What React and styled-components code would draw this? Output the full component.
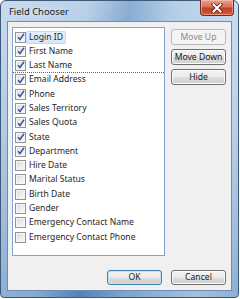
import React from "react";
import styled, { createGlobalStyle } from "styled-components";

const GlobalStyle = createGlobalStyle`
  html, body {
    margin: 0;
    padding: 0;
    background: #ffffff;
  }
  body {
    font-family: "Noto Sans", "Liberation Sans", sans-serif;
    font-size: 8.6px;
    color: #1e1e1e;
  }
`;

const Window = styled.div`
  width: 239px;
  height: 298px;
  box-sizing: border-box;
  display: flex;
  flex-direction: column;
  padding: 0 6px 6px 6px;
  border: 1px solid #3e5876;
  border-radius: 6px 6px 4px 4px;
  background:
    linear-gradient(100deg, rgba(255,255,255,0.4) 0%, rgba(255,255,255,0.25) 30%, rgba(40,90,150,0.2) 45%, rgba(255,255,255,0.2) 60%, rgba(255,255,255,0.45) 85%, rgba(255,255,255,0.3) 100%),
    linear-gradient(to bottom, #a3c3e3 0%, #8bb0d6 40%, #5b8cc0 100%);
  position: relative;
`;

const TitleBar = styled.div`
  height: 20px;
  display: flex;
  align-items: center;
  padding-left: 2px;
  font-size: 9.4px;
  color: #1a1a1a;
  text-shadow: 0 0 6px rgba(255, 255, 255, 0.9);
`;

const CloseButton = styled.div`
  position: absolute;
  top: -1px;
  right: 4px;
  width: 34px;
  height: 16px;
  box-sizing: border-box;
  border: 1px solid #6b2a22;
  border-top: none;
  border-radius: 0 0 4px 4px;
  background: linear-gradient(to bottom, #eba08e 0%, #d9705a 45%, #c53d22 55%, #d45a36 100%);
  box-shadow: inset 0 0 0 1px rgba(255, 210, 200, 0.5);
  display: flex;
  align-items: center;
  justify-content: center;
`;

const Client = styled.div`
  flex: 1;
  display: flex;
  flex-direction: column;
  background: #f0f0f0;
  border: 1px solid #6f8db0;
  padding: 5px 5px 4px 4px;
`;

const Main = styled.div`
  display: flex;
  gap: 6px;
`;

const ListBox = styled.div`
  width: 154px;
  height: 229px;
  box-sizing: border-box;
  background: #ffffff;
  border: 1px solid #82a4cf;
  padding-top: 2px;
  overflow: hidden;
`;

const Row = styled.div`
  height: 14.29px;
  box-sizing: border-box;
  display: flex;
  align-items: center;
  padding-left: 2px;
  border-bottom: ${(p) => (p.$divider ? "1px dotted #3a6fb5" : "none")};
  white-space: nowrap;
`;

const Box = styled.span`
  width: 11px;
  height: 11px;
  flex: none;
  box-sizing: border-box;
  border: 1px solid #939393;
  background: linear-gradient(135deg, #d9d9d9 0%, #efefef 60%, #fbfbfb 100%);
  box-shadow: inset 0 0 0 1px #f6f6f6;
  display: flex;
  align-items: center;
  justify-content: center;
`;

const Label = styled.span`
  padding: 0 2px;
  line-height: 11px;
  border: 1px solid ${(p) => (p.$selected ? "#c3d9f3" : "transparent")};
  border-radius: 2px;
  background: ${(p) => (p.$selected ? "linear-gradient(to bottom, #e6f0fc, #d7e6f8)" : "transparent")};
`;

const SideButtons = styled.div`
  display: flex;
  flex-direction: column;
  gap: 4px;
  padding-top: 2px;
`;

const Button = styled.button`
  width: 55px;
  height: ${(p) => p.$h || 16}px;
  padding: 0;
  box-sizing: border-box;
  font-family: inherit;
  font-size: 8.6px;
  line-height: 1;
  white-space: nowrap;
  color: ${(p) => (p.disabled ? "#8a8a8a" : "#1a1a1a")};
  border: 1px solid ${(p) => (p.disabled ? "#b5b9bc" : p.$default ? "#3c7fb1" : "#707070")};
  border-radius: 3px;
  background: ${(p) =>
    p.disabled
      ? "#f4f4f4"
      : "linear-gradient(to bottom, #f2f2f2 0%, #ebebeb 50%, #dddddd 51%, #cfcfcf 100%)"};
  box-shadow: inset 0 0 0 1px ${(p) => (p.disabled ? "#f4f4f4" : p.$default ? "#bfe3f7" : "#fbfbfb")};
`;

const Footer = styled.div`
  display: flex;
  justify-content: flex-end;
  gap: 9px;
  margin-top: 14px;
`;

const Check = () => (
  <svg width="8" height="8" viewBox="0 0 8 8">
    <path d="M1 4.2 L3 6.5 L7 0.8" fill="none" stroke="#3b55a0" strokeWidth="1.5" />
  </svg>
);

const CloseGlyph = () => (
  <svg width="12" height="10" viewBox="0 0 12 10">
    <path d="M2.5 1.5 L9.5 8.5 M9.5 1.5 L2.5 8.5" stroke="#5a1e16" strokeWidth="3.6" strokeLinecap="square" />
    <path d="M2.5 1.5 L9.5 8.5 M9.5 1.5 L2.5 8.5" stroke="#ffffff" strokeWidth="2" strokeLinecap="square" />
  </svg>
);

const fields = [
  { name: "Login ID", on: true, selected: true },
  { name: "First Name", on: true },
  { name: "Last Name", on: true, divider: true },
  { name: "Email Address", on: true },
  { name: "Phone", on: true },
  { name: "Sales Territory", on: true },
  { name: "Sales Quota", on: true },
  { name: "State", on: true },
  { name: "Department", on: true },
  { name: "Hire Date" },
  { name: "Marital Status" },
  { name: "Birth Date" },
  { name: "Gender" },
  { name: "Emergency Contact Name" },
  { name: "Emergency Contact Phone" },
];

export default function App() {
  return (
    <>
      <GlobalStyle />
      <Window>
        <TitleBar>Field Chooser</TitleBar>
        <CloseButton>
          <CloseGlyph />
        </CloseButton>
        <Client>
          <Main>
            <ListBox>
              {fields.map((f) => (
                <Row key={f.name} $divider={f.divider}>
                  <Box>{f.on && <Check />}</Box>
                  <Label $selected={f.selected}>{f.name}</Label>
                </Row>
              ))}
            </ListBox>
            <SideButtons>
              <Button disabled>Move Up</Button>
              <Button>Move Down</Button>
              <Button>Hide</Button>
            </SideButtons>
          </Main>
          <Footer>
            <Button $h={15} $default>OK</Button>
            <Button $h={15}>Cancel</Button>
          </Footer>
        </Client>
      </Window>
    </>
  );
}
